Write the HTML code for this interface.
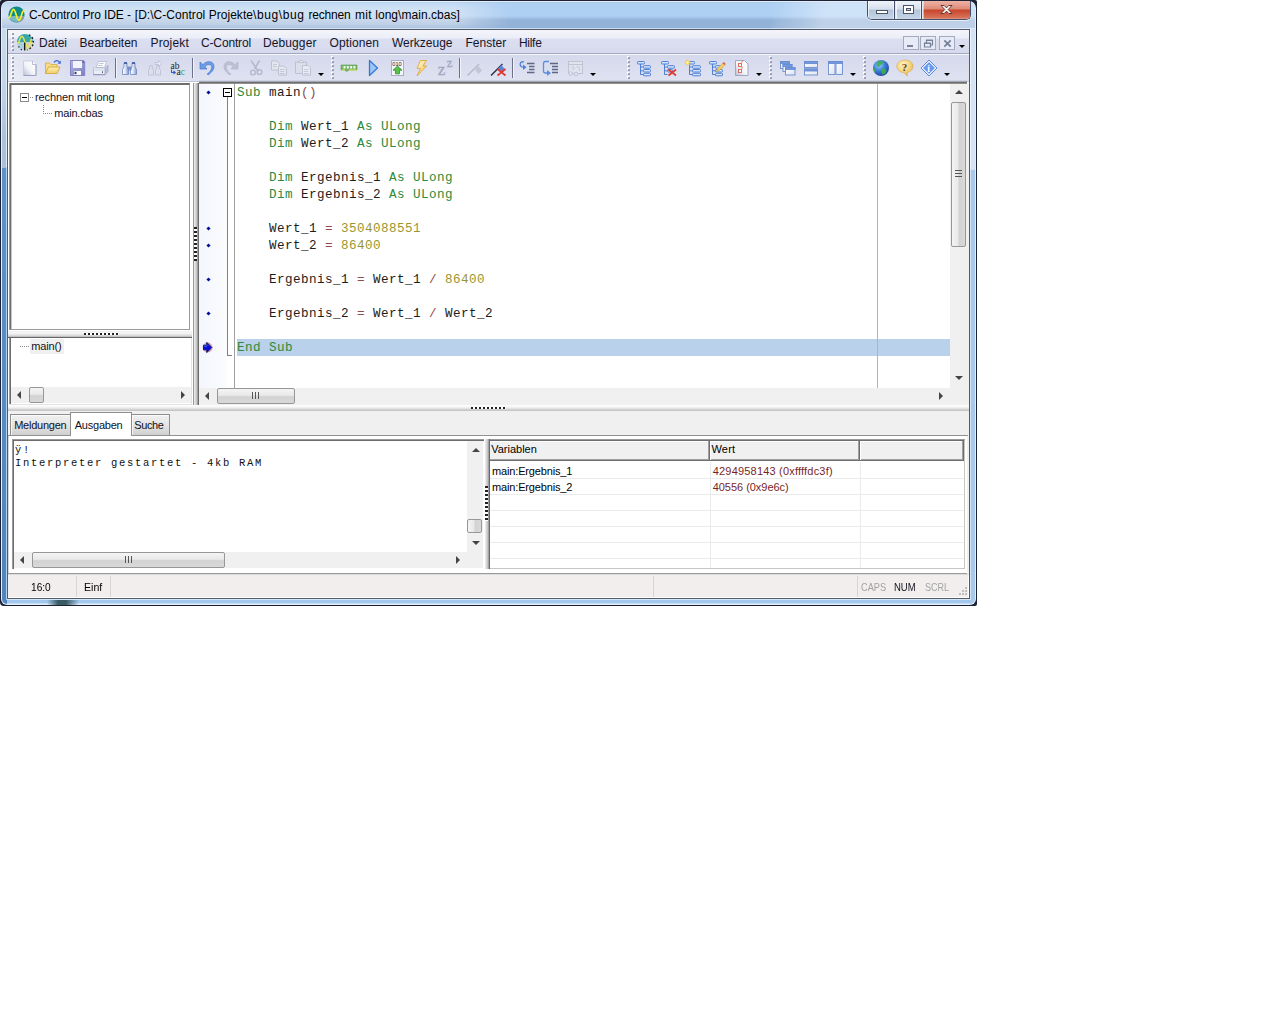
<!DOCTYPE html>
<html lang="de">
<head>
<meta charset="utf-8">
<title>C-Control Pro IDE</title>
<style>
html,body{margin:0;padding:0;background:#fff;}
body{width:1276px;height:1024px;position:relative;overflow:hidden;font-family:"Liberation Sans",sans-serif;font-size:11px;color:#000;}
.a{position:absolute;box-sizing:border-box;}
.t{position:absolute;white-space:nowrap;line-height:1;}
svg{position:absolute;overflow:visible;}
/* window frame */
#win{left:0;top:0;width:977px;height:606px;border-radius:2px 2px 2px 4px;background:#1b2236;overflow:hidden;}
#glass{left:1px;top:1px;width:975px;height:604px;border-radius:7px 7px 6px 6px;background:#e4eefa;}
#glass2{left:2px;top:2px;width:973px;height:602px;border-radius:6px 6px 5px 5px;
 background:
  linear-gradient(#cbdbee 0,#c5d6ea 50px,#aac2dc 110px,#a8c0da 139px) 0 27px/5px 139px no-repeat,
  linear-gradient(#5d92ca,#4f84be) 0 166px/5px 441px no-repeat,
  linear-gradient(#d4e3f3,#d4e3f3) 968px 27px/5px 141px no-repeat,
  linear-gradient(#a6c9ec,#a6c9ec) 968px 168px/5px 441px no-repeat,
  linear-gradient(#d5e8f8 0,#d5e8f8 1px,#9fc6ec 1px,#a4c9ee 4px,#c4dcf4 4px) 0 597px/973px 5px no-repeat,
  linear-gradient(#a9c5e2 0,#aed0f3 1px,#aed0f3 14px,#93b2d8 18px,#93b2d8 26px,#c8ddf5 26px,#c8ddf5 27px,#c0d4ea 27px);}
#glowr{left:770px;top:0;width:210px;height:27px;background:linear-gradient(105deg,rgba(255,255,255,0) 0,rgba(255,255,255,0.4) 55px,rgba(255,255,255,0.4) 100%);}
#glow{left:-12px;top:1px;width:530px;height:25px;background:linear-gradient(90deg,rgba(232,238,246,0.62) 0,rgba(232,238,246,0.62) 462px,rgba(232,238,246,0) 520px);filter:blur(4px);border-radius:8px;}
#client{left:7px;top:29px;width:963px;height:570px;border:1px solid #555b66;background:#f0f0f0;}
/* menu + toolbar */
#menubar{left:8px;top:30px;width:961px;height:23px;background:linear-gradient(#f4f5fb 0,#eceef8 8px,#dbdff0 9px,#d6daed 100%);}
#mbline{left:8px;top:53px;width:961px;height:2px;background:linear-gradient(#a4a9c2 0,#a4a9c2 1px,#f6f7fc 1px);}
#toolbar{left:8px;top:55px;width:961px;height:26px;background:linear-gradient(90deg,rgba(255,255,255,0.45) 0,rgba(255,255,255,0.3) 10px,rgba(255,255,255,0) 60px),linear-gradient(#d5d9ec,#dfe2f1);}
#tbline{left:8px;top:81px;width:961px;height:2px;background:linear-gradient(#bfc3d8 0,#bfc3d8 1px,#f4f5fa 1px);}
.mi{top:37px;font-size:12px;color:#15152a;}
.grip{width:3px;background:repeating-linear-gradient(transparent 0,transparent 1px,#9ba0b6 1px,#9ba0b6 3px,transparent 3px,transparent 4px) 1px 0/2px 100% no-repeat,repeating-linear-gradient(#fff 0,#fff 2px,transparent 2px,transparent 4px) 0 0/2px 100% no-repeat;}
.sep{width:1px;background:#6c7088;height:20px;top:58px;box-shadow:1px 0 0 #f1f3fa;}
.dd{width:0;height:0;border-left:3px solid transparent;border-right:3px solid transparent;border-top:3px solid #000;}
/* panels */
.sunk{border:1px solid #828790;border-top-color:#6e737b;border-left-color:#6e737b;background:#fff;}
.code{font-family:"Liberation Mono",monospace;font-size:12.6px;letter-spacing:0.44px;left:237px;white-space:pre;color:#1c1c1c;}
.kw{color:#2c8a3c;}
.num{color:#9a962e;}
.op{color:#8e4a4a;}
.dot{left:206.6px;width:3px;height:3px;background:#00109a;transform:rotate(45deg);}
.sb{background:#f0f0f0;}
.thumbh{border:1px solid #979797;border-radius:2px;background:linear-gradient(#f4f4f4 0,#e9e9e9 45%,#d2d2d2 55%,#d9d9d9 100%);}
.thumbv{border:1px solid #979797;border-radius:2px;background:linear-gradient(90deg,#f4f4f4 0,#e9e9e9 45%,#d2d2d2 55%,#d9d9d9 100%);}
.arl{width:0;height:0;border-top:4px solid transparent;border-bottom:4px solid transparent;border-right:4px solid #444;}
.arr{width:0;height:0;border-top:4px solid transparent;border-bottom:4px solid transparent;border-left:4px solid #444;}
.aru{width:0;height:0;border-left:4px solid transparent;border-right:4px solid transparent;border-bottom:4px solid #444;}
.ard{width:0;height:0;border-left:4px solid transparent;border-right:4px solid transparent;border-top:4px solid #444;}
.tab{border:1px solid #8e8e8e;border-bottom:none;background:linear-gradient(#f0f0f0,#e4e4e4 50%,#d0d0d0);box-shadow:inset 1px 1px 0 rgba(255,255,255,0.7);}
.tl{font-size:11px;color:#10101c;}
.st{font-size:11px;top:582px;transform-origin:0 50%;}
.vt{font-size:11px;}
.hl{background:#ebebeb;height:1px;}
.vl{background:#ebebeb;width:1px;}
</style>
</head>
<body>
<div id="win" class="a"></div>
<div id="glass" class="a"></div>
<div id="glass2" class="a"></div>
<div class="a" style="left:2px;top:2px;width:973px;height:27px;overflow:hidden;border-radius:6px 6px 0 0;"><div id="glow" class="a"></div><div id="glowr" class="a"></div></div>
<!-- title bar -->
<svg style="left:7.5px;top:6.200px" width="17" height="17" viewBox="0 0 17 17">
 <circle cx="8.500" cy="8.500" r="8.100" fill="#0f8a8c"/>
 <path d="M0.700 10 A8.100 8.100 0 0 0 16.300 10 Z" fill="#7bb9c2"/>
 <path d="M9 10 L16.300 10 A8.100 8.100 0 0 1 9 16.600 Z" fill="#8b9ca8"/>
 <path d="M1 11.800 C2.800 11.800 3.500 3.300 5.500 3.300 C7.800 3.300 8.600 14.300 11 14.300 C13.200 14.300 13.500 5 15.800 4.600" fill="none" stroke="#eef22a" stroke-width="1.700" stroke-linecap="round"/>
</svg>
<span class="t tt" style="left:29.0px;letter-spacing:-0.124px;top:9px;font-size:12px;color:#000;">C-Control Pro IDE </span>
<span class="t tt" style="left:127px;letter-spacing:0px;top:9px;font-size:12px;color:#000;">- </span>
<span class="t tt" style="left:134.8px;letter-spacing:0.037px;top:9px;font-size:12px;color:#000;">[D:\C-Control Projekte</span>
<span class="t tt" style="left:253px;letter-spacing:0.598px;top:9px;font-size:12px;color:#000;">\bug\bug </span>
<span class="t tt" style="left:308.5px;letter-spacing:-0.196px;top:9px;font-size:12px;color:#000;">rechnen </span>
<span class="t tt" style="left:355px;letter-spacing:0.333px;top:9px;font-size:12px;color:#000;">mit </span>
<span class="t tt" style="left:375.2px;letter-spacing:0.05px;top:9px;font-size:12px;color:#000;">long\main.cbas]</span>
<!-- caption buttons -->
<div class="a" style="left:867px;top:1px;width:104px;height:19px;border:1px solid #46506a;border-top:none;border-radius:0 0 5px 5px;background:#dfe8f3;overflow:hidden;box-shadow:0 1px 0 rgba(255,255,255,0.6);">
 <div class="a" style="left:0;top:0;width:27px;height:18px;background:linear-gradient(#eef3f9 0,#d6e0ed 8px,#b4c5da 9px,#c6d5e7 18px);border-right:1px solid #46506a;box-shadow:inset 1px 0 0 rgba(255,255,255,0.7),inset -1px 0 0 rgba(255,255,255,0.5);"></div>
 <div class="a" style="left:28px;top:0;width:26px;height:18px;background:linear-gradient(#eef3f9 0,#d6e0ed 8px,#b4c5da 9px,#c6d5e7 18px);border-right:1px solid #46506a;box-shadow:inset 1px 0 0 rgba(255,255,255,0.7),inset -1px 0 0 rgba(255,255,255,0.5);"></div>
 <div class="a" style="left:55px;top:0;width:48px;height:18px;background:linear-gradient(#eeb3a6 0,#dc8a78 8px,#c9452b 9px,#d6755c 17px,#e8a896 18px);box-shadow:inset 1px 0 0 rgba(255,255,255,0.5),inset -1px 0 0 rgba(255,255,255,0.5);"></div>
</div>
<svg style="left:867px;top:0" width="104" height="20" viewBox="0 0 104 20">
 <rect x="9.500" y="10.500" width="11" height="3" fill="#fff" stroke="#4b5464" stroke-width="1"/>
 <rect x="36.500" y="5.500" width="10" height="8" fill="#fff" stroke="#4b5464"/>
 <rect x="39.500" y="8.500" width="4" height="2" fill="#c9d5e4" stroke="#4b5464"/>
 <path d="M74 5.500h3.200l2.300 2.400 2.300-2.400h3.200l-3.800 4 3.800 4h-3.200l-2.300-2.400-2.300 2.400h-3.200l3.800-4z" fill="#fff" stroke="#5a2a22" stroke-width="0.900"/>
</svg>

<div class="a" style="left:6px;top:29px;width:1px;height:571px;background:linear-gradient(#e3edf8 0,#e3edf8 138px,#b3d2ee 138px);"></div>
<div class="a" style="left:970px;top:29px;width:1px;height:571px;background:linear-gradient(#eef4fb 0,#eef4fb 140px,#d2e4f6 140px);"></div>
<div class="a" style="left:47px;top:600px;width:32px;height:5px;background:linear-gradient(90deg,rgba(44,78,86,0) 0,rgba(44,78,86,0.9) 11px,rgba(44,78,86,0.9) 19px,rgba(44,78,86,0) 32px);"></div>
<div id="client" class="a"></div>
<div id="menubar" class="a"></div>
<div id="mbline" class="a"></div>
<div id="toolbar" class="a"></div>
<div id="tbline" class="a"></div>
<!-- menu bar -->
<div class="a grip" style="left:11px;top:32px;height:20px;"></div>
<svg style="left:16px;top:33px" width="19" height="19" viewBox="0 0 19 19">
 <path d="M1 9 A8 8 0 0 1 17 9 Z" fill="#3aa5aa"/>
 <path d="M1 9 L9 9 L9 17 A8 8 0 0 1 1 9 Z" fill="#a6d2de"/>
 <path d="M9 9 L17 9 A8 8 0 0 1 9 17 Z" fill="#d6d8a8"/>
 <path d="M10.500 9.500h4v3.500h-4z" fill="#c8cdd8"/>
 <path d="M1.800 10.500 C3.300 10 3.800 3.500 5.800 3.500 C7.800 3.500 8.300 7.500 9.300 10 C10 12 11.500 14 12.500 13.500 C14 12.500 14.500 8 15.500 5.500" fill="none" stroke="#e6e84e" stroke-width="1.400"/>
 <path d="M8.700 9.500v8" stroke="#111" stroke-width="1.300"/>
 <path d="M13 1.800 A8 8 0 0 1 11 16.800" stroke="#111" stroke-width="1.400" stroke-dasharray="1.600 2.200" fill="none"/>
 <path d="M2.500 13.500l3.500 4" stroke="#111" stroke-width="1.200" stroke-dasharray="1.200 2.400" fill="none"/>
</svg>
<span class="t mi" style="left:39px;">Datei</span>
<span class="t mi" style="left:79.5px;">Bearbeiten</span>
<span class="t mi" style="left:150.5px;letter-spacing:0.15px">Projekt</span>
<span class="t mi" style="left:201px;letter-spacing:-0.15px">C-Control</span>
<span class="t mi" style="left:263px;letter-spacing:0.1px">Debugger</span>
<span class="t mi" style="left:329.5px;letter-spacing:0.1px">Optionen</span>
<span class="t mi" style="left:392px;">Werkzeuge</span>
<span class="t mi" style="left:465.5px;">Fenster</span>
<span class="t mi" style="left:519px;letter-spacing:-0.3px">Hilfe</span>
<!-- MDI buttons -->
<div class="a" style="left:903px;top:36px;width:16px;height:14px;border:1px solid #a3abbf;background:#e8ebf5;"></div>
<div class="a" style="left:920px;top:36px;width:16px;height:14px;border:1px solid #a3abbf;background:#e8ebf5;"></div>
<div class="a" style="left:939px;top:36px;width:16px;height:14px;border:1px solid #a3abbf;background:#e8ebf5;"></div>
<svg style="left:903px;top:36px" width="56" height="14" viewBox="0 0 56 14">
 <rect x="4" y="9" width="6" height="2" fill="#76819a"/>
 <path d="M23.500 7v-3h6v5h-2.500M23.500 4.500h6" fill="none" stroke="#76819a" stroke-width="1.200"/><path d="M21.500 7h6v4h-6zM21.500 7.500h6" fill="none" stroke="#76819a" stroke-width="1.200"/>
 <path d="M41.300 4.400l6.400 6.200M47.700 4.400l-6.400 6.200" stroke="#76819a" stroke-width="1.900" fill="none"/>
</svg>
<div class="a dd" style="left:959px;top:45px;"></div>

<!-- toolbar -->
<div class="a grip" style="left:11px;top:56px;height:24px;"></div>
<div class="a grip" style="left:331px;top:56px;height:24px;"></div>
<div class="a grip" style="left:627px;top:56px;height:24px;"></div>
<div class="a grip" style="left:769px;top:56px;height:24px;"></div>
<div class="a grip" style="left:863px;top:56px;height:24px;"></div>
<div class="a sep" style="left:115px;"></div>
<div class="a sep" style="left:192px;"></div>
<div class="a sep" style="left:459px;"></div>
<div class="a sep" style="left:512px;"></div>
<div class="a dd" style="left:318px;top:73px;"></div>
<div class="a dd" style="left:590px;top:73px;"></div>
<div class="a dd" style="left:756px;top:73px;"></div>
<div class="a dd" style="left:850px;top:73px;"></div>
<div class="a dd" style="left:944px;top:73px;"></div>
<svg id="tbi" style="left:0;top:0" width="977" height="84" viewBox="0 0 977 84">
<defs>
 <linearGradient id="gdoc" x1="1" y1="0" x2="0" y2="1"><stop offset="0" stop-color="#fff"/><stop offset="0.55" stop-color="#f4f5fa"/><stop offset="1" stop-color="#b9bdd4"/></linearGradient>
 <linearGradient id="gfold" x1="0" y1="0" x2="0" y2="1"><stop offset="0" stop-color="#fcefb4"/><stop offset="1" stop-color="#f3cf68"/></linearGradient>
 <linearGradient id="gflop" x1="0" y1="0" x2="1" y2="1"><stop offset="0" stop-color="#b0b3e2"/><stop offset="1" stop-color="#7c80c4"/></linearGradient>
 <linearGradient id="gbin" x1="0" y1="0" x2="1" y2="0"><stop offset="0" stop-color="#ffffff"/><stop offset="0.45" stop-color="#dfe7f7"/><stop offset="1" stop-color="#7f98cf"/></linearGradient>
 <linearGradient id="gwin" x1="0" y1="0" x2="1" y2="1"><stop offset="0" stop-color="#fff"/><stop offset="1" stop-color="#dde3f2"/></linearGradient>
 <radialGradient id="gglobe" cx="0.38" cy="0.32" r="0.75"><stop offset="0" stop-color="#9fd0ff"/><stop offset="0.45" stop-color="#3f83dc"/><stop offset="1" stop-color="#1c3f9a"/></radialGradient>
 <radialGradient id="ghelp" cx="0.4" cy="0.3" r="0.8"><stop offset="0" stop-color="#fff3c4"/><stop offset="0.6" stop-color="#f4cf74"/><stop offset="1" stop-color="#d9a94a"/></radialGradient>
 <linearGradient id="gbolt" x1="0" y1="0" x2="1" y2="1"><stop offset="0" stop-color="#fffbe0"/><stop offset="1" stop-color="#f6c244"/></linearGradient>
</defs>
<!-- new -->
<path d="M23.500 61h9l3.500 3.500v11h-12.500z" fill="url(#gdoc)" stroke="#c3c7dc" stroke-width="0.800"/><path d="M36 64.500v11h-12.500" fill="none" stroke="#9aa0c2" stroke-width="1"/>
<path d="M32.500 61v3.500h3.500" fill="#fff" stroke="#a6abc8" stroke-width="0.800"/>
<!-- open -->
<path d="M45.500 73.500v-10.500h4l1.500 1.500h6v3" fill="#f7dc85" stroke="#d9b04a" stroke-width="0.900"/>
<path d="M45.500 73.500l3-6.500h11.500l-3 6.500z" fill="url(#gfold)" stroke="#d2a840" stroke-width="0.900"/>
<path d="M54 62.500c1.500-2.500 4.500-2.500 5.800 0.300" fill="none" stroke="#3f6fd0" stroke-width="1.400"/>
<path d="M57.500 63.800h3.300v-3.300z" fill="#3f6fd0"/>
<!-- save -->
<path d="M70.500 60.500h13l1.200 1.200v13.800h-14.200z" fill="url(#gflop)" stroke="#7b7fc0" stroke-width="0.900"/>
<rect x="73" y="61" width="9" height="7" fill="#f3f4fb"/>
<rect x="74" y="71" width="7" height="4" fill="#f8f8ff"/>
<rect x="74.500" y="71.800" width="2" height="2.400" fill="#3a3c66"/>
<rect x="82.500" y="61.500" width="1.200" height="1.200" fill="#2d2f55"/>
<!-- print -->
<path d="M96 67.500l2.500-6h8l-2 6z" fill="#fbfcfe" stroke="#aab0c8" stroke-width="0.700"/>
<path d="M99.200 63.500h4.500M98.300 65.500h4.500" stroke="#b4b9cc" stroke-width="0.800"/>
<path d="M105 68.200l3-3v6.500l-3 3z" fill="#b6bed8" stroke="#9aa2c0" stroke-width="0.600"/>
<path d="M104.500 67.500l2-2.300h1.500l-3 3z" fill="#c9d0e4"/>
<rect x="93.300" y="68.200" width="11.700" height="6.500" fill="#eaeff7" stroke="#a2a9c4" stroke-width="0.700"/>
<rect x="93.700" y="68.500" width="11" height="1.300" fill="#fbfcfe"/>
<path d="M93.500 70h11.500" stroke="#b0b7cc" stroke-width="0.600"/>
<path d="M93.500 74.700h11.500" stroke="#8890b0" stroke-width="0.900"/>
<rect x="102" y="71.300" width="1" height="1.700" fill="#555d78"/>
<!-- find -->
<g stroke="#6f88c0" stroke-width="0.800">
 <path d="M122.500 74.500v-5l1.500-3v-3.500h3v3.500l1.500 3v5z" fill="url(#gbin)"/>
 <path d="M130.500 74.500v-5l1.500-3v-3.500h3v3.500l1.500 3v5z" fill="url(#gbin)"/>
 <rect x="128" y="67" width="3" height="3" fill="#7f95c6"/>
</g>
<rect x="124" y="62" width="3" height="2" fill="#4a64a6"/><rect x="132" y="62" width="3" height="2" fill="#4a64a6"/>
<!-- find next (disabled) -->
<g stroke="#b9bdd0" stroke-width="0.800" fill="#dcdfec">
 <path d="M148.500 75v-4.500l1.200-2.500v-2.500h2.600v2.500l1.200 2.500v4.500z"/>
 <path d="M155.500 75v-4.500l1.200-2.500v-2.500h2.600v2.500l1.200 2.500v4.500z"/>
 <path d="M155 62.500h3.500v-2l3.500 3-3.500 3v-2h-3.500z" fill="#e9ebf4"/>
</g>
<!-- replace -->
<text x="170.500" y="68.600" font-family="Liberation Serif,serif" font-size="9.500" fill="#222">ab</text>
<text x="176.500" y="75.200" font-family="Liberation Serif,serif" font-size="9.500" fill="#222">a<tspan fill="#3aa64a">c</tspan></text>
<path d="M171.500 69.500v3h3.500M173.500 71l1.800 1.500-1.800 1.500" fill="none" stroke="#3a5fc0" stroke-width="1.100"/>
<!-- undo -->
<path d="M200 62 L200 69 L207 69 L205 66.800 C206.500 64 211.400 63.500 211.800 67 C211.800 69.500 210 72 207.200 74 L208 75 C211 73 214 70 214 66.500 C214 60.400 206 60.400 203 64.700 Z" fill="#6c9be6" stroke="#4577cf" stroke-width="0.700" stroke-linejoin="round"/>
<!-- redo (disabled) -->
<path d="M 238.000 62.000 L 238.000 69.000 L 231.000 69.000 L 233.000 66.800 C 231.500 64.000 226.600 63.500 226.200 67.000 C 226.200 69.500 228.000 72.000 230.800 74.000 L 230.000 75.000 C 227.000 73.000 224.000 70.000 224.000 66.500 C 224.000 60.400 232.000 60.400 235.000 64.700 Z" fill="#bcc0d2" stroke="#b0b4c8" stroke-width="0.700" stroke-linejoin="round"/>
<!-- cut (disabled) -->
<g stroke="#b4b8ca" fill="none">
 <path d="M251 60.500l7.500 11M259.500 60.500l-5 8.500" stroke-width="1.500"/>
 <circle cx="253" cy="72.500" r="2.400" stroke-width="1.400"/><circle cx="259.500" cy="72" r="2.400" stroke-width="1.400"/>
</g>
<!-- copy (disabled) -->
<g stroke="#babdce" stroke-width="0.900" fill="#e3e5ef">
 <path d="M271.500 61h5.500l2.500 2.500v6.500h-8z"/>
 <path d="M278.500 66h5.500l2.500 2.500v6.500h-8z"/>
 <path d="M273 64.500h4M273 66.500h4M280 69.500h4.500M280 71.500h4.500M280 73.500h4.500" stroke-width="0.700"/>
</g>
<!-- paste (disabled) -->
<g stroke="#babdce" stroke-width="0.900" fill="#dcdfea">
 <path d="M295.500 62h11v11.500h-11z"/>
 <path d="M298.500 62.500l1.500-2h2.500l1.500 2z" fill="#e9ebf3"/>
 <path d="M302.500 65.500h5.500l2.500 2.500v7h-8z" fill="#e9ebf3"/>
 <path d="M304 69.500h4.500M304 71.500h4.500M304 73.500h4.500" stroke-width="0.700"/>
</g>
<!-- chip -->
<path d="M341 65h16v5h-8.500l-1 1.200h-1.500l-1-1.200h-4z" fill="#74b868" stroke="#5a9c52" stroke-width="0.600"/>
<path d="M342 70h3M349 70h7.500" stroke="#e8e25a" stroke-width="1.200"/>
<g fill="#f3f7f0"><rect x="343.500" y="66" width="2" height="2.500"/><rect x="346.800" y="66" width="2" height="2.500"/><rect x="350.100" y="66" width="2" height="2.500"/><rect x="353.400" y="66" width="2" height="2.500"/></g>
<!-- play -->
<path d="M369.500 60.500v15l8-7.500z" fill="#9cc6f4" stroke="#3878d4" stroke-width="1.300" stroke-linejoin="round"/>
<!-- upload -->
<rect x="391.500" y="60.500" width="12" height="15" fill="#f4f5fa" stroke="#a9aec4" stroke-width="1"/>
<text x="392.300" y="65.800" font-family="Liberation Sans,sans-serif" font-size="5.600" fill="#223">010</text>
<path d="M397.500 66l4.500 4.200h-2.500v3.600h-4v-3.600h-2.500z" fill="#58c24a" stroke="#2f8f2c" stroke-width="0.800"/>
<!-- lightning -->
<path d="M420.500 60.500h6l-3.500 5.500h3.500l-9.500 9.800 3.500-7.500h-3.500z" fill="url(#gbolt)" stroke="#e0a028" stroke-width="0.800" stroke-linejoin="round"/>
<!-- zZ (disabled) -->
<text x="437.700" y="74.800" font-family="Liberation Serif,serif" font-size="17" fill="#a3a7be" stroke="#a3a7be" stroke-width="0.300">z</text>
<text x="446.800" y="66.900" font-family="Liberation Serif,serif" font-size="13" fill="#a3a7be" stroke="#a3a7be" stroke-width="0.300">z</text>
<!-- flag disabled -->
<path d="M467.500 75.500l11.500-11.500" stroke="#b4b8c8" stroke-width="1.400"/>
<path d="M474 68.500l3.500-3.500 4.500 5.500-3.500 3.500z" fill="#c3c6d4"/>
<!-- flag clear -->
<path d="M491 75.500l11.500-11.500" stroke="#2a2f48" stroke-width="1.400"/>
<path d="M498 68.500l3.500-3.500 3.500 4.500-3.500 3z" fill="#5a86d8"/>
<path d="M497.500 69l8 6.500M505.500 69l-8 6.500" stroke="#e03a2e" stroke-width="1.700"/>
<!-- step into -->
<path d="M527 63.500h7.500M529 66.500h5.500M529 69.500h5.500M527 72.500h7.500" stroke="#5e6884" stroke-width="1.300"/>
<path d="M524 62c-4.500-1.500-5.500 5-0.500 5.200" fill="none" stroke="#4b7fd8" stroke-width="1.300"/>
<path d="M523 64.500l3.500 2.700-3.500 2.700z" fill="#4b7fd8"/>
<!-- step over -->
<path d="M550 63.500h8M552 66.500h6M552 69.500h6M552 72.500h6" stroke="#5e6884" stroke-width="1.300"/>
<path d="M549 61.500h-3.500c-1.500 0-2 0.500-2 2v7.500c0 1.500 0.500 2 2 2h2" fill="none" stroke="#5d8ee0" stroke-width="1.300"/>
<path d="M547 70l4 3-4 3z" fill="#5d8ee0"/>
<!-- window disabled -->
<g stroke="#bcc0d0" fill="#e1e4ee" stroke-width="0.900">
 <rect x="568.500" y="61.500" width="14" height="12"/>
 <path d="M568.500 64.500h14" />
 <path d="M571 67h3.500M576.500 67h3.500M572 70l3-2M579.500 68v3" stroke-width="0.800"/>
 <circle cx="570.500" cy="73.500" r="1.800"/><circle cx="576" cy="74" r="1.800"/>
</g>
<!-- tree icons -->
<g id="tr1" stroke="#4f80d4" stroke-width="1" fill="#d6e4fa">
 <path d="M640.500 64v10.500M640.500 67h3M640.500 70.800h3M640.500 74.500h3" fill="none"/>
 <rect x="637.500" y="61.500" width="7" height="2.500" rx="0.800"/>
 <rect x="643.500" y="65.700" width="7" height="2.500" rx="0.800"/>
 <rect x="643.500" y="69.500" width="7" height="2.500" rx="0.800"/>
 <rect x="643.500" y="73.300" width="7" height="2.500" rx="0.800"/>
</g>
<g stroke="#4f80d4" stroke-width="1" fill="#d6e4fa">
 <path d="M664.500 64v10.500M664.500 67h3M664.500 70.800h3M664.500 74.500h3" fill="none"/>
 <rect x="661.500" y="61.500" width="7" height="2.500" rx="0.800"/>
 <rect x="667.500" y="65.700" width="7" height="2.500" rx="0.800"/>
 <rect x="667.500" y="69.500" width="5" height="2.500" rx="0.800"/>
</g>
<path d="M668.500 69.500l7.500 6M676 69.500l-7.500 6" stroke="#e23b2e" stroke-width="1.800"/>
<g stroke="#4f80d4" stroke-width="1" fill="#d6e4fa">
 <path d="M689.500 64v10.500M689.500 67h3M689.500 70.800h3M689.500 74.500h3" fill="none"/>
 <rect x="689.500" y="61.500" width="5" height="2.500" rx="0.800"/>
 <rect x="692.500" y="65.700" width="8" height="2.500" rx="0.800"/>
 <rect x="692.500" y="69.500" width="8" height="2.500" rx="0.800"/>
 <rect x="692.500" y="73.300" width="8" height="2.500" rx="0.800"/>
</g>
<path d="M687.500 59.500v6M684.500 62.500h6M685.500 60.500l4 4M689.500 60.500l-4 4" stroke="#f7d23a" stroke-width="1.100"/>
<circle cx="687.500" cy="62.500" r="1.300" fill="#fff6b0"/>
<g stroke="#4f80d4" stroke-width="1" fill="#d6e4fa">
 <path d="M712.500 64v10.500M712.500 67h3M712.500 70.800h3M712.500 74.500h3" fill="none"/>
 <rect x="709.500" y="61.500" width="7" height="2.500" rx="0.800"/>
 <rect x="715.500" y="65.700" width="5" height="2.500" rx="0.800"/>
 <rect x="715.500" y="69.500" width="7" height="2.500" rx="0.800"/>
 <rect x="715.500" y="73.300" width="7" height="2.500" rx="0.800"/>
</g>
<path d="M716.500 71.500l1-2.800 6-6 1.800 1.800-6 6z" fill="#f5cf62" stroke="#c99a3a" stroke-width="0.600"/>
<path d="M722.500 63.200l1.300-1.200 1.700 1.700-1.200 1.300z" fill="#e0604a"/>
<!-- checklist doc -->
<path d="M735.500 60.500h9l3.500 3.500v11.500h-12.500z" fill="url(#gdoc)" stroke="#a2a7c0" stroke-width="1"/>
<rect x="738.500" y="63.500" width="3" height="3" fill="#fff" stroke="#e0604a" stroke-width="0.900"/>
<rect x="738.500" y="69.500" width="3" height="3" fill="#fff" stroke="#e0604a" stroke-width="0.900"/>
<path d="M741 62.500l2-1.500M741 68.500l2-1.500" stroke="#e0604a" stroke-width="0.800"/>
<!-- cascade -->
<g stroke="#6a8dd0" stroke-width="0.900">
 <rect x="780.500" y="61.500" width="9" height="7" fill="url(#gwin)"/><rect x="780.500" y="61.500" width="9" height="2" fill="#6f9be4"/>
 <rect x="783" y="64.500" width="9" height="7" fill="url(#gwin)"/><rect x="783" y="64.500" width="9" height="2" fill="#6f9be4"/>
 <rect x="785.500" y="67.500" width="9.500" height="7.500" fill="url(#gwin)"/><rect x="785.500" y="67.500" width="9.500" height="2" fill="#6f9be4"/>
</g>
<!-- tile h -->
<g stroke="#6a8dd0" stroke-width="0.900">
 <rect x="804.500" y="61.500" width="13" height="6" fill="url(#gwin)"/><rect x="804.500" y="61.500" width="13" height="2" fill="#6f9be4"/>
 <rect x="804.500" y="69" width="13" height="6" fill="url(#gwin)"/><rect x="804.500" y="69" width="13" height="2" fill="#6f9be4"/>
</g>
<!-- tile v -->
<g stroke="#6a8dd0" stroke-width="0.900">
 <rect x="828.500" y="61.500" width="6.500" height="13" fill="url(#gwin)"/><rect x="828.500" y="61.500" width="6.500" height="2" fill="#6f9be4"/>
 <rect x="836" y="61.500" width="6.500" height="13" fill="url(#gwin)"/><rect x="836" y="61.500" width="6.500" height="2" fill="#6f9be4"/>
</g>
<!-- globe -->
<circle cx="881" cy="68" r="8" fill="url(#gglobe)"/>
<path d="M877 62c2-1.500 5-1 6.500 0.500-1 2-3 1.500-3.500 3.500-1 1.500-3 1-3.500-1zM882 69c2-1 4 0 4.500 2-0.500 2-2 3.500-4 3.500-1-1.500-1.500-3.500-0.500-5.500zM874 68c1.500 0 2.500 1.500 2 3l-1.500 1c-0.800-1-1-2.500-0.500-4z" fill="#3fae4a" opacity="0.900"/>
<!-- help -->
<path d="M905 60c4.500 0 8 2.800 8 6.300 0 3-2.500 5.500-6 6.200l0.300 3.500-3.500-3.400c-4-0.300-7-3-7-6.300 0-3.500 3.700-6.300 8.200-6.300z" fill="url(#ghelp)" stroke="#d3a54a" stroke-width="0.600"/>
<text x="901.800" y="70.500" font-family="Liberation Serif,serif" font-weight="bold" font-size="11" fill="#5a3d1c">?</text>
<!-- info -->
<path d="M929 60l8 8-8 8-8-8z" fill="#eaf1fd" stroke="#5a8ae0" stroke-width="1"/>
<path d="M929 62.500l5.500 5.500-5.500 5.500-5.500-5.500z" fill="#6a9af0" stroke="#4a7ad8" stroke-width="0.500"/>
<text x="927.300" y="71.500" font-family="Liberation Serif,serif" font-weight="bold" font-size="9.500" fill="#fff">i</text>
</svg>

<!-- left panels -->
<div class="a" style="left:8px;top:82px;width:961px;height:324px;background:#fff;"></div>
<!-- tree -->
<div class="a" style="left:9px;top:83px;width:181px;height:247px;background:#fff;border-left:2px solid #6d6d6d;border-top:2px solid #6d6d6d;border-right:1px solid #9a9a9a;border-bottom:1px solid #9a9a9a;"></div>
<div class="a" style="left:9px;top:83px;width:1px;height:247px;background:#9c9c9c;"></div>
<div class="a" style="left:11px;top:85px;width:1px;height:244px;background:#c4c4c4;"></div>
<div class="a" style="left:20px;top:93px;width:9px;height:9px;border:1px solid #8a8a8a;background:#fff;"></div>
<div class="a" style="left:22px;top:97px;width:5px;height:1px;background:#000;"></div>
<div class="a" style="left:30px;top:97px;width:4px;height:1px;background:repeating-linear-gradient(90deg,#888 0,#888 1px,transparent 1px,transparent 2px);"></div>
<div class="a" style="left:43px;top:105px;width:1px;height:9px;background:repeating-linear-gradient(#888 0,#888 1px,transparent 1px,transparent 2px);"></div>
<div class="a" style="left:43px;top:113px;width:9px;height:1px;background:repeating-linear-gradient(90deg,#888 0,#888 1px,transparent 1px,transparent 2px);"></div>
<span class="t tl" style="left:35px;top:91.5px;letter-spacing:-0.114px">rechnen mit long</span>
<span class="t tl" style="left:54.3px;top:107.5px;letter-spacing:-0.193px">main.cbas</span>
<!-- h splitter -->
<div class="a" style="left:8px;top:331px;width:184px;height:7px;background:linear-gradient(#ededed 0,#f8f8f8 2px,#d4d4d4 5px,#b0b0b0 6px,#666 6px,#666 7px);"></div>
<div class="a" style="left:84px;top:333px;width:35px;height:2px;background:repeating-linear-gradient(90deg,#222 0,#222 1.6px,#fff 1.6px,#fff 4px);"></div>
<!-- func list -->
<div class="a" style="left:9px;top:338px;width:2px;height:67px;background:linear-gradient(90deg,#9c9c9c 0,#9c9c9c 1px,#6d6d6d 1px);"></div>
<div class="a" style="left:30px;top:339px;width:34px;height:15px;background:#f0f0f0;"></div>
<div class="a" style="left:20px;top:346px;width:9px;height:1px;background:repeating-linear-gradient(90deg,#888 0,#888 1px,transparent 1px,transparent 2px);"></div>
<span class="t tl" style="left:31.2px;top:341px;letter-spacing:-0.145px">main()</span>
<div class="a sb" style="left:11px;top:387px;width:180px;height:16px;"></div>
<div class="a arl" style="left:17px;top:391px;"></div>
<div class="a arr" style="left:181px;top:391px;"></div>
<div class="a thumbh" style="left:29px;top:387px;width:15px;height:16px;"></div>
<div class="a" style="left:191px;top:338px;width:1px;height:68px;background:#e3e3e3;"></div>
<div class="a" style="left:9px;top:404px;width:183px;height:1px;background:#e3e3e3;"></div>
<!-- v splitter -->
<div class="a" style="left:193px;top:83px;width:6px;height:323px;background:linear-gradient(90deg,#999 0,#999 1px,#f0f0f0 1px,#e0e0e0 2px,#bdbdbd 4px,#8a8a8a 5px,#6a6a6a 5px);"></div>
<div class="a" style="left:194px;top:227px;width:3px;height:34px;background:repeating-linear-gradient(#222 0,#222 1.6px,#fff 1.6px,#fff 4px);"></div>

<!-- editor -->
<div class="a" style="left:199px;top:80px;width:768px;height:4px;background:linear-gradient(#cfd2e2 0,#cfd2e2 1px,#a4a7b6 1px,#a4a7b6 2px,#6e6e6e 2px,#6e6e6e 3px,#909090 3px);"></div>
<div class="a" style="left:199px;top:84px;width:28px;height:304px;background:linear-gradient(90deg,#f4f6fd,#fbfcfe);"></div>
<div class="a" style="left:227px;top:97px;width:1px;height:259px;background:#808080;"></div>
<div class="a" style="left:227px;top:355px;width:5px;height:1px;background:#808080;"></div>
<div class="a" style="left:234px;top:84px;width:1px;height:304px;background:#a0a0a0;"></div>
<div class="a" style="left:223px;top:88px;width:9px;height:9px;border:1px solid #000;background:#fff;"></div>
<div class="a" style="left:225px;top:92px;width:5px;height:1px;background:#000;"></div>
<div class="a" style="left:237px;top:339px;width:713px;height:17px;background:#b9d1ea;"></div>
<div class="a" style="left:877px;top:84px;width:1px;height:304px;background:#b4b4b4;"></div>
<div class="a dot" style="top:90.6px;"></div>
<div class="a dot" style="top:226.6px;"></div>
<div class="a dot" style="top:243.6px;"></div>
<div class="a dot" style="top:277.6px;"></div>
<div class="a dot" style="top:311.6px;"></div>
<svg style="left:202px;top:341px" width="12" height="13" viewBox="0 0 12 13">
 <circle cx="5.600" cy="6.500" r="5" fill="#c58a98" opacity="0.700"/>
 <path d="M1.500 4.200h3.300v-2.800l5 5.100-5 5.100v-2.800h-3.300z" fill="#0c0ce0" stroke="#05055e" stroke-width="0.800" stroke-linejoin="round"/>
 <path d="M2.200 5.200h2.600M5 3.600l1.200 1.200" stroke="#4da0f0" stroke-width="0.800"/>
</svg>
<span class="t code" style="top:87px;"><span class="kw">Sub</span> main<span class="op">()</span></span>
<span class="t code" style="top:121px;">    <span class="kw">Dim</span> Wert_1 <span class="kw">As ULong</span></span>
<span class="t code" style="top:138px;">    <span class="kw">Dim</span> Wert_2 <span class="kw">As ULong</span></span>
<span class="t code" style="top:172px;">    <span class="kw">Dim</span> Ergebnis_1 <span class="kw">As ULong</span></span>
<span class="t code" style="top:189px;">    <span class="kw">Dim</span> Ergebnis_2 <span class="kw">As ULong</span></span>
<span class="t code" style="top:223px;">    Wert_1 <span class="op">=</span> <span class="num">3504088551</span></span>
<span class="t code" style="top:240px;">    Wert_2 <span class="op">=</span> <span class="num">86400</span></span>
<span class="t code" style="top:274px;">    Ergebnis_1 <span class="op">=</span> Wert_1 <span class="op">/</span> <span class="num">86400</span></span>
<span class="t code" style="top:308px;">    Ergebnis_2 <span class="op">=</span> Wert_1 <span class="op">/</span> Wert_2</span>
<span class="t code" style="top:342px;"><span class="kw">End Sub</span></span>
<!-- editor v scrollbar -->
<div class="a sb" style="left:950px;top:84px;width:17px;height:304px;"></div>
<div class="a aru" style="left:955px;top:90px;"></div>
<div class="a ard" style="left:955px;top:376px;"></div>
<div class="a thumbv" style="left:951px;top:102px;width:15px;height:145px;"></div>
<div class="a" style="left:955px;top:170px;width:7px;height:7px;background:repeating-linear-gradient(#555 0,#555 1px,transparent 1px,transparent 3px);"></div>
<!-- editor h scrollbar -->
<div class="a sb" style="left:199px;top:388px;width:768px;height:17px;"></div>
<div class="a arl" style="left:205px;top:392px;"></div>
<div class="a arr" style="left:939px;top:392px;"></div>
<div class="a thumbh" style="left:217px;top:388px;width:78px;height:16px;"></div>
<div class="a" style="left:252px;top:392px;width:7px;height:7px;background:repeating-linear-gradient(90deg,#555 0,#555 1px,transparent 1px,transparent 3px);"></div>
<div class="a" style="left:967px;top:83px;width:2px;height:323px;background:#f0f0f0;"></div>

<!-- bottom splitter -->
<div class="a" style="left:8px;top:405px;width:961px;height:6px;background:linear-gradient(#fff 0,#fbfbfb 1px,#ececec 3px,#c9c9c9 5px,#c4c4c4 6px);"></div>
<div class="a" style="left:471px;top:407px;width:35px;height:2px;background:repeating-linear-gradient(90deg,#222 0,#222 1.6px,#fff 1.6px,#fff 4px);"></div>
<!-- tab page -->
<div class="a" style="left:8px;top:435px;width:960px;height:139px;background:#fff;border-top:1px solid #919191;border-right:1px solid #9a9a9a;border-bottom:1px solid #9a9a9a;"></div>
<div class="a" style="left:8px;top:574px;width:961px;height:1px;background:#dcdcdc;"></div>
<div class="a" style="left:967px;top:436px;width:2px;height:138px;background:#f0f0f0;"></div>
<div class="a" style="left:8px;top:436px;width:1px;height:137px;background:#d4d4d4;"></div>
<!-- tabs -->
<div class="a tab" style="left:10px;top:414px;width:61px;height:21px;"></div>
<div class="a tab" style="left:131px;top:414px;width:39px;height:21px;"></div>
<div class="a" style="left:70px;top:412px;width:62px;height:24px;background:#fff;border:1px solid #8e8e8e;border-bottom:none;"></div>
<span class="t tl" style="left:14.2px;top:420px;letter-spacing:-0.238px">Meldungen</span>
<span class="t tl" style="left:74.7px;top:420px;letter-spacing:-0.218px">Ausgaben</span>
<span class="t tl" style="left:134.3px;top:420px;letter-spacing:-0.4px">Suche</span>
<!-- output panel -->
<div class="a" style="left:12px;top:439px;width:472px;height:130px;background:#fff;border-left:2px solid #6d6d6d;border-top:2px solid #6d6d6d;"></div>
<div class="a" style="left:12px;top:439px;width:472px;height:1px;background:#9a9a9a;"></div>
<div class="a" style="left:12px;top:439px;width:1px;height:130px;background:#9a9a9a;"></div>
<span class="t" id="o1" style="left:15px;top:445px;font-family:'Liberation Mono',monospace;font-size:10.5px;letter-spacing:1.7px;color:#111;">ÿ!</span>
<span class="t" id="o2" style="left:15px;top:458px;font-family:'Liberation Mono',monospace;font-size:10.5px;letter-spacing:1.7px;color:#111;">Interpreter gestartet - 4kb RAM</span>
<div class="a sb" style="left:467px;top:441px;width:16px;height:111px;"></div>
<div class="a aru" style="left:472px;top:448px;"></div>
<div class="a ard" style="left:472px;top:541px;"></div>
<div class="a thumbv" style="left:467px;top:519px;width:15px;height:14px;"></div>
<div class="a sb" style="left:14px;top:552px;width:469px;height:16px;"></div>
<div class="a arl" style="left:20px;top:556px;"></div>
<div class="a arr" style="left:456px;top:556px;"></div>
<div class="a thumbh" style="left:32px;top:552px;width:193px;height:16px;"></div>
<div class="a" style="left:125px;top:556px;width:7px;height:7px;background:repeating-linear-gradient(90deg,#555 0,#555 1px,transparent 1px,transparent 3px);"></div>
<!-- v splitter 2 -->
<div class="a" style="left:485px;top:439px;width:5px;height:130px;background:linear-gradient(90deg,#f4f4f4 0,#e0e0e0 1px,#bdbdbd 3px,#8a8a8a 4px,#6a6a6a 4px);"></div>
<div class="a" style="left:485px;top:486px;width:3px;height:35px;background:repeating-linear-gradient(#222 0,#222 1.6px,#fff 1.6px,#fff 4px);"></div>
<!-- vars panel -->
<div class="a" style="left:490px;top:439px;width:475px;height:130px;background:#fff;border-top:2px solid #6d6d6d;border-right:1px solid #c6c6c6;border-bottom:1px solid #c6c6c6;"></div>
<div class="a" style="left:490px;top:439px;width:475px;height:1px;background:#9a9a9a;"></div>
<div class="a" style="left:490px;top:441px;width:474px;height:20px;background:#f0f0f0;border-bottom:2px solid #707070;"></div>
<div class="a" style="left:490px;top:459px;width:474px;height:1px;background:#a0a0a0;"></div>
<div class="a" style="left:490px;top:441px;width:474px;height:1px;background:#fff;"></div>
<div class="a" style="left:708px;top:441px;width:3px;height:19px;background:linear-gradient(90deg,#a0a0a0 0,#a0a0a0 1px,#6d6d6d 1px,#6d6d6d 2px,#fff 2px);"></div>
<div class="a" style="left:858px;top:441px;width:3px;height:19px;background:linear-gradient(90deg,#a0a0a0 0,#a0a0a0 1px,#6d6d6d 1px,#6d6d6d 2px,#fff 2px);"></div>
<div class="a" style="left:962px;top:441px;width:2px;height:19px;background:linear-gradient(90deg,#a0a0a0 0,#a0a0a0 1px,#6d6d6d 1px);"></div>
<span class="t vt" style="left:491.2px;top:444px;">Variablen</span>
<span class="t vt" style="left:711.5px;top:444px;letter-spacing:0.19px">Wert</span>
<span class="t vt" style="left:492.1px;top:466px;letter-spacing:-0.164px">main:Ergebnis_1</span>
<span class="t vt" style="left:492.1px;top:482px;letter-spacing:-0.164px">main:Ergebnis_2</span>
<span class="t vt" style="left:712.7px;top:466px;color:#7a1f1f;letter-spacing:0.195px">4294958143 (0xffffdc3f)</span>
<span class="t vt" style="left:712.7px;top:482px;color:#7a1f1f;letter-spacing:-0.03px">40556 (0x9e6c)</span>
<div class="a hl" style="left:490px;top:478px;width:474px;"></div>
<div class="a hl" style="left:490px;top:494px;width:474px;"></div>
<div class="a hl" style="left:490px;top:510px;width:474px;"></div>
<div class="a hl" style="left:490px;top:526px;width:474px;"></div>
<div class="a hl" style="left:490px;top:542px;width:474px;"></div>
<div class="a hl" style="left:490px;top:558px;width:474px;"></div>
<div class="a vl" style="left:710px;top:462px;height:106px;"></div>
<div class="a vl" style="left:860px;top:462px;height:106px;"></div>

<!-- status bar -->
<div class="a" style="left:8px;top:575px;width:961px;height:23px;background:#fff;"></div>
<div class="a" style="left:8px;top:575px;width:960px;height:22px;background:#f1eeed;"></div>
<div class="a" style="left:76px;top:576px;width:1px;height:21px;background:#d9d5d4;"></div>
<div class="a" style="left:110px;top:576px;width:1px;height:21px;background:#d9d5d4;"></div>
<div class="a" style="left:653px;top:576px;width:1px;height:21px;background:#d9d5d4;"></div>
<div class="a" style="left:857px;top:576px;width:1px;height:21px;background:#d9d5d4;"></div>
<span class="t st" style="left:31px;transform:scaleX(0.92)">16:0</span>
<span class="t st" style="left:83.5px;transform:scaleX(0.96)">Einf</span>
<span class="t st" style="left:860.5px;color:#a3a3a3;transform:scaleX(0.84)">CAPS</span>
<span class="t st" style="left:894px;color:#15151f;transform:scaleX(0.865)">NUM</span>
<span class="t st" style="left:924.5px;color:#a3a3a3;transform:scaleX(0.82)">SCRL</span>
<svg style="left:957px;top:586px" width="11" height="11" viewBox="0 0 11 11"><g fill="#c2bebe"><rect x="8" y="1" width="2" height="2"/><rect x="5" y="4" width="2" height="2"/><rect x="8" y="4" width="2" height="2"/><rect x="2" y="7" width="2" height="2"/><rect x="5" y="7" width="2" height="2"/><rect x="8" y="7" width="2" height="2"/></g></svg>

</body>
</html>
